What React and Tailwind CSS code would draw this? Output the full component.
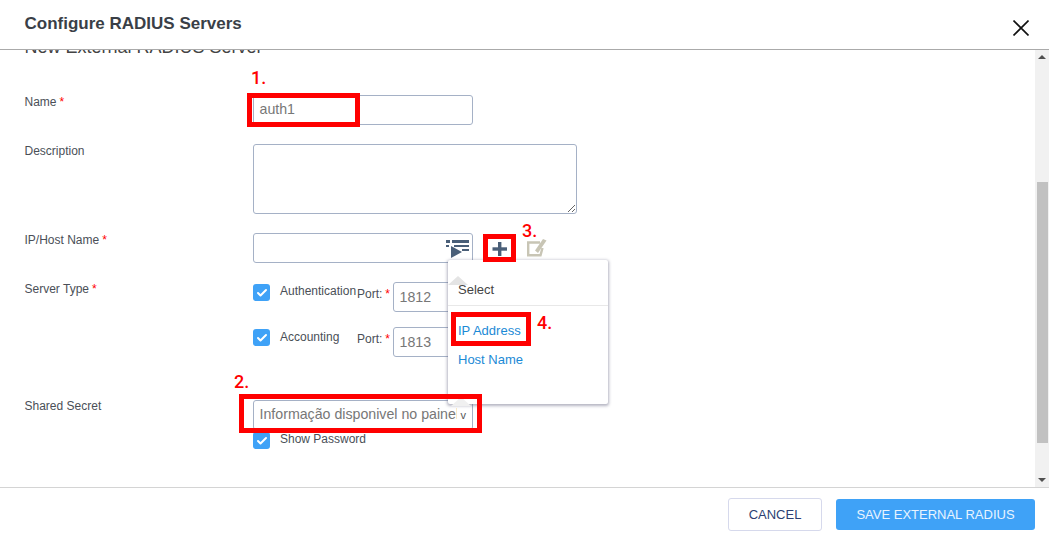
import { Check } from "lucide-react";

const inputClass = "h-[30px] border border-[#a5b1c6] rounded-[3px] bg-white pl-[5.5px] pr-[6px] text-[14.2px] text-[#777] flex items-center";

function Req() {
  return <span className="text-[#f00] ml-[3px]">*</span>;
}

function Row({ label, required, className, children }) {
  return (
    <div className={"flex " + className}>
      <div className="w-[228.5px] text-[12px] leading-[14px] text-[#4a4f57]">
        {label}
        {required && <Req />}
      </div>
      <div className="flex-1">{children}</div>
    </div>
  );
}

function Checkbox() {
  return (
    <span className="w-[17px] h-[17px] rounded-[3px] bg-[#3fa2f7] flex items-center justify-center shrink-0">
      <Check size={12} strokeWidth={4} className="text-white" />
    </span>
  );
}

function Marker({ className, children }) {
  return (
    <div className={"absolute text-[#f00] text-[18px] leading-[18px] font-medium font-['Roboto',sans-serif] " + className}>
      {children}
    </div>
  );
}

function RedBox({ className }) {
  return <div className={"absolute border-[5px] border-[#f00] " + className} />;
}

export default function App() {
  return (
    <div className="relative w-[1049px] h-[538px] overflow-hidden bg-white flex flex-col font-['Liberation_Sans',Arial,sans-serif]">
      {/* Header */}
      <div className="h-[50px] shrink-0 border-b border-[#aaa] flex justify-between pl-[24.5px] pr-[20px]">
        <h1 className="text-[17px] leading-[20px] font-bold text-[#3a3f47] pt-[14px]">Configure RADIUS Servers</h1>
        <svg width="16" height="16" viewBox="0 0 16 16" className="mt-[20px]" stroke="#111" strokeWidth="1.6" fill="none">
          <path d="M0.5 0.5L15.5 15.5M15.5 0.5L0.5 15.5" />
        </svg>
      </div>

      {/* Body */}
      <div className="flex flex-1 min-h-0 overflow-hidden">
        <div className="flex-1 overflow-hidden pl-[24.5px]">
          <div className="text-[18px] leading-[20px] text-[#444] -mt-[13px]">New External RADIUS Server</div>

          <Row label="Name" required className="mt-[38px]">
            <div className={inputClass + " w-[220px]"}>auth1</div>
          </Row>

          <Row label="Description" className="mt-[19px]">
            <textarea readOnly className="block w-[324px] h-[70px] border border-[#a5b1c6] rounded-[3px] bg-white" />
          </Row>

          <Row label="IP/Host Name" required className="mt-[19px]">
            <div className="flex items-center">
              <div className={inputClass + " w-[220px] justify-end !pr-[3px]"}>
                <svg width="23" height="18" viewBox="0 0 23 18" fill="#4a5f78" className="mt-[2px]">
                  <rect x="0" y="0" width="4" height="3" />
                  <rect x="6" y="0" width="17" height="3" />
                  <rect x="0" y="5" width="3" height="2" />
                  <rect x="8" y="5" width="15" height="2" />
                  <rect x="16" y="9" width="7" height="2" />
                  <path d="M5 6L16 12L5 18Z" />
                </svg>
              </div>
              <svg width="16" height="14" viewBox="0 0 16 14" fill="#4a5f78" className="ml-[19px] mt-[1px]">
                <rect x="6" y="0" width="3.4" height="14" />
                <rect x="0.5" y="5.3" width="14.5" height="3.4" />
              </svg>
              <svg width="20" height="19" viewBox="0 0 20 19" fill="none" className="ml-[19px] -mt-[1px]">
                <path d="M13 4.5H1.2V17.3H13.5L15.5 10" stroke="#c8c5b5" strokeWidth="2.4" />
                <path d="M8 12.5L16 1L19.5 2.5L11 15Z" fill="#c8c5b5" />
              </svg>
            </div>
          </Row>

          <Row label="Server Type" required className="mt-[19px]">
            <div className="flex">
              <div className="w-[104px] flex pt-[2px]">
                <Checkbox />
                <span className="text-[12px] leading-[14px] text-[#4a4f57] ml-[10px] whitespace-nowrap">Authentication</span>
              </div>
              <div className="w-[36px] text-[12px] text-[#4a4f57] pt-[3px] whitespace-nowrap">
                Port:<Req />
              </div>
              <div className={inputClass + " w-[80px] pt-[2px]"}>1812</div>
            </div>
            <div className="flex mt-[15px]">
              <div className="w-[104px] flex pt-[2px]">
                <Checkbox />
                <span className="text-[12px] leading-[14px] text-[#4a4f57] ml-[10px] mt-[1px]">Accounting</span>
              </div>
              <div className="w-[36px] text-[12px] text-[#4a4f57] pt-[3px] whitespace-nowrap">
                Port:<Req />
              </div>
              <div className={inputClass + " w-[80px] pt-[2px]"}>1813</div>
            </div>
          </Row>

          <Row label="Shared Secret" className="mt-[42px]">
            <div className="mt-[1px]">
              <div className={inputClass + " w-[220px] justify-between !pr-[6px] overflow-hidden whitespace-nowrap"}>
                <span className="overflow-hidden w-[197px]">Informação disponivel no painel</span>
                <span className="text-[11px] text-[#555]">v</span>
              </div>
              <div className="flex mt-[2px]">
                <Checkbox />
                <span className="text-[12px] leading-[14px] text-[#4a4f57] ml-[10px]">Show Password</span>
              </div>
            </div>
          </Row>
        </div>

        {/* Scrollbar */}
        <div className="w-[14px] shrink-0 bg-[#f1f1f1] flex flex-col items-center">
          <div className="mt-[5px] w-0 h-0 border-x-[4px] border-x-transparent border-b-[4px] border-b-[#505050]" />
          <div className="w-[11px] ml-[1px] h-[261px] bg-[#c1c1c1] mt-[123px]" />
          <div className="mt-auto mb-[5px] w-0 h-0 border-x-[4px] border-x-transparent border-t-[4px] border-t-[#505050]" />
        </div>
      </div>

      {/* Footer */}
      <div className="h-[51px] shrink-0 border-t border-[#d4d4d4] flex justify-end items-start gap-[14px] pr-[14px] pt-[10px]">
        <button className="w-[94px] h-[33px] border border-[#d6d9ec] rounded-[3px] text-[13px] text-[#2d3f73]">CANCEL</button>
        <button className="w-[199px] h-[31px] mt-[1px] rounded-[3px] bg-[#3fa2f7] text-[13px] text-[#e8f4ff]">SAVE EXTERNAL RADIUS</button>
      </div>

      {/* Popover */}
      <div className="absolute left-[448px] top-[260px] w-[160px] h-[144px] bg-white rounded-[2px] shadow-[0_1px_3px_1px_rgba(90,90,120,0.45)]">
        <div className="absolute left-[0px] top-[16px] w-0 h-0 border-x-[10px] border-x-transparent border-b-[9px] border-b-[#e4e4e4]" />
        <div className="h-[46px] border-b border-[#e8e8e8] pl-[10px] pt-[22px] text-[13px] leading-[15px] text-[#444]">Select</div>
        <div className="pl-[10px] pt-[17px] text-[13px] leading-[15px] text-[#1b8ad6]">IP Address</div>
        <div className="pl-[10px] pt-[14px] text-[13px] leading-[15px] text-[#1b8ad6]">Host Name</div>
        <div className="absolute left-[3px] -bottom-[2px] w-0 h-0 border-x-[10px] border-x-transparent border-b-[9px] border-b-[#f0f0f0]" />
      </div>

      {/* Annotations */}
      <RedBox className="left-[247px] top-[93px] w-[113px] h-[34px]" />
      <RedBox className="left-[239px] top-[394px] w-[243px] h-[39px]" />
      <RedBox className="left-[483px] top-[234px] w-[33px] h-[28px]" />
      <RedBox className="left-[451px] top-[312px] w-[80px] h-[34px]" />
      <Marker className="left-[251px] top-[69px]">1.</Marker>
      <Marker className="left-[234px] top-[373px]">2.</Marker>
      <Marker className="left-[522px] top-[222px]">3.</Marker>
      <Marker className="left-[537px] top-[314px]">4.</Marker>
    </div>
  );
}
